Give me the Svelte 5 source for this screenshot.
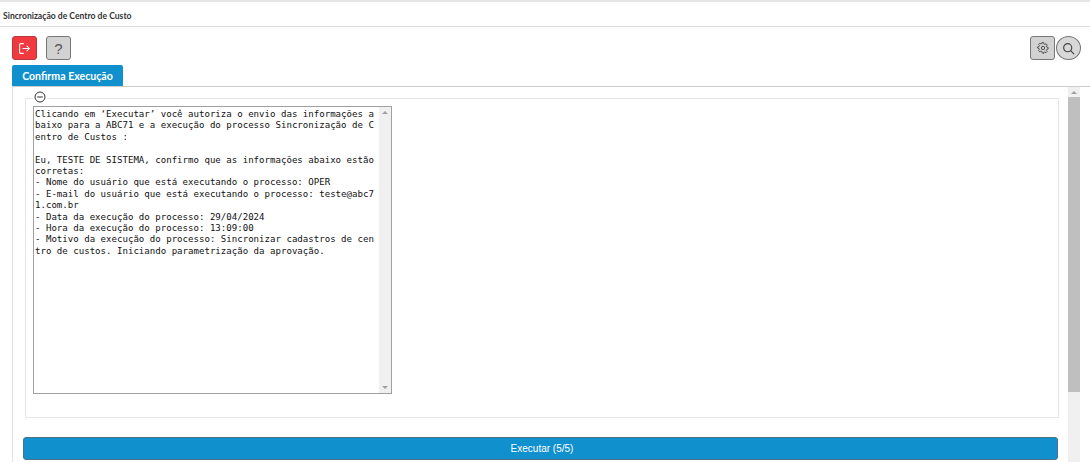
<script>
  let mensagem = `Clicando em ‘Executar’ você autoriza o envio das informações a
baixo para a ABC71 e a execução do processo Sincronização de C
entro de Custos :

Eu, TESTE DE SISTEMA, confirmo que as informações abaixo estão
corretas:
- Nome do usuário que está executando o processo: OPER
- E-mail do usuário que está executando o processo: teste@abc7
1.com.br
- Data da execução do processo: 29/04/2024
- Hora da execução do processo: 13:09:00
- Motivo da execução do processo: Sincronizar cadastros de cen
tro de custos. Iniciando parametrização da aprovação.`;
</script>

<div class="page">
  <header class="title-bar">Sincronização de Centro de Custo</header>

  <div class="toolbar">
    <div class="group">
      <button class="tool danger" aria-label="Sair">
        <svg viewBox="0 0 16 16" width="13" height="13" fill="none" stroke="currentColor" stroke-width="1.3" stroke-linecap="round" stroke-linejoin="round">
          <path d="M6.5 2H3.5a1.5 1.5 0 0 0-1.5 1.5v9A1.5 1.5 0 0 0 3.5 14h3" />
          <path d="M6 8h8M11 5l3 3-3 3" />
        </svg>
      </button>
      <button class="tool help">?</button>
    </div>
    <div class="group tight">
      <button class="tool" aria-label="Configurar">
        <svg viewBox="0 0 16 16" width="12" height="12" fill="none" stroke="#444" stroke-width="1.2">
          <circle cx="8" cy="8" r="2.2" />
          <path d="M6.8 1.5h2.4l.4 1.9 1.3.6 1.7-1 1.6 1.8-1.1 1.6.4 1.3 1.9.5v2.2l-1.9.5-.5 1.3 1.1 1.6-1.7 1.7-1.6-1-1.4.5-.4 1.9" transform="translate(0 -.6) scale(.96)" />
          <path d="M9.2 14.5H6.8l-.4-1.9-1.3-.6-1.7 1-1.6-1.8 1.1-1.6-.4-1.3-1.9-.5V6.2l1.9-.5.5-1.3-1.1-1.6 1.7-1.7 1.6 1 1.4-.5.4-1.9" transform="translate(.3 .6) scale(.96)" />
        </svg>
      </button>
      <button class="tool round" aria-label="Pesquisar">
        <svg viewBox="0 0 16 16" width="13" height="13" fill="none" stroke="#444" stroke-width="1.4" stroke-linecap="round">
          <circle cx="7" cy="7" r="5" />
          <path d="M11 11l3.5 3.5" />
        </svg>
      </button>
    </div>
  </div>

  <div class="tab">Confirma Execução</div>

  <section class="panel">
    <div class="panel-body">
      <fieldset>
        <legend>
          <svg viewBox="0 0 12 12" width="12" height="12" fill="none" stroke="#333" stroke-width="1">
            <circle cx="6" cy="6" r="5" />
            <path d="M3.2 6h5.6" />
          </svg>
        </legend>
        <div class="text-box">
          <textarea readonly wrap="off" value={mensagem}></textarea>
          <div class="text-scroll">
            <span class="arrow up small"></span>
            <span class="arrow down small"></span>
          </div>
        </div>
      </fieldset>
      <button class="run">Executar (5/5)</button>
    </div>
    <div class="scrollbar">
      <span class="arrow up"></span>
      <div class="thumb"></div>
    </div>
  </section>
</div>

<style>
  :global(body) {
    margin: 0;
    background: #fff;
    overflow: hidden;
  }

  .page {
    height: 462px;
    overflow: hidden;
    border-top: 2px solid #e6e6e6;
    box-sizing: border-box;
    font-family: Lato, "Liberation Sans", sans-serif;
    color: #222;
  }

  .title-bar {
    height: 24px;
    line-height: 28px;
    padding-left: 3px;
    font-size: 8.6px;
    font-weight: 700;
    color: #333;
    border-bottom: 1px solid #ddd;
  }

  .toolbar {
    display: flex;
    justify-content: space-between;
    padding: 9px 9px 0 12px;
    height: 29px;
  }

  .group {
    display: flex;
    gap: 9px;
  }

  .group.tight {
    gap: 1px;
  }

  .tool {
    width: 25px;
    height: 24px;
    padding: 0;
    display: flex;
    align-items: center;
    justify-content: center;
    background: #d2d2d2;
    border: 1px solid #777;
    border-radius: 3px;
    color: #444;
  }

  .danger {
    background: #f03a3f;
    border-color: #b53a3d;
    color: #fff;
  }

  .help {
    font-family: "Liberation Sans", sans-serif;
    font-size: 15px;
    color: #555;
  }

  .round {
    border-radius: 50%;
    background: #d8d8d8;
  }

  .tab {
    width: 111px;
    height: 21px;
    line-height: 22px;
    margin-left: 12px;
    text-align: center;
    font-size: 10.6px;
    font-weight: 700;
    color: #fff;
    background: #1090cc;
    border-radius: 2px 2px 0 0;
  }

  .panel {
    display: flex;
    margin-left: 12px;
    height: 376px;
    border-top: 1px solid #ccc;
    border-left: 1px solid #e2e2e2;
  }

  .panel-body {
    width: 1055px;
    padding: 11px 0 0 12px;
    box-sizing: border-box;
  }

  fieldset {
    width: 1034px;
    height: 320px;
    margin: 0;
    padding: 7px 0 0 7px;
    box-sizing: border-box;
    border: 1px solid #e6e6e6;
    position: relative;
  }

  legend {
    position: absolute;
    top: -8px;
    left: 7px;
    padding: 0 1px;
    height: 12px;
    line-height: 0;
    background: #fff;
  }

  .text-box {
    display: flex;
    width: 359px;
    height: 288px;
    box-sizing: border-box;
    border: 1px solid #a0a0a0;
  }

  textarea {
    flex: 1;
    min-width: 0;
    margin: 0;
    padding: 2px 0 0 1px;
    box-sizing: border-box;
    border: 0;
    resize: none;
    outline: none;
    overflow: hidden;
    font-family: "DejaVu Sans Mono", monospace;
    font-size: 9.09px;
    line-height: 11.4px;
    color: #111;
  }

  .text-scroll {
    width: 12px;
    background: #f0f0f0;
    display: flex;
    flex-direction: column;
    align-items: center;
    justify-content: space-between;
    padding: 4px 0;
    box-sizing: border-box;
  }

  .run {
    display: block;
    width: 1035px;
    height: 23px;
    margin: 19px 0 0 -2px;
    padding: 0 0 0 3px;
    background: #1090cc;
    border: 1px solid #4f7286;
    border-radius: 3px;
    color: #fff;
    font-family: "Liberation Sans", sans-serif;
    font-size: 10px;
  }

  .scrollbar {
    width: 12px;
    height: 100%;
    background: #f0f0f0;
    display: flex;
    flex-direction: column;
    align-items: center;
  }

  .arrow {
    width: 0;
    height: 0;
    border-left: 3px solid transparent;
    border-right: 3px solid transparent;
  }

  .arrow.up {
    margin: 4px 0 3px;
    border-bottom: 3px solid #a0a0a0;
  }

  .arrow.down {
    border-top: 3px solid #a0a0a0;
  }

  .arrow.small {
    margin: 0;
  }

  .thumb {
    width: 100%;
    height: 295px;
    background: #bfbfbf;
  }
</style>
